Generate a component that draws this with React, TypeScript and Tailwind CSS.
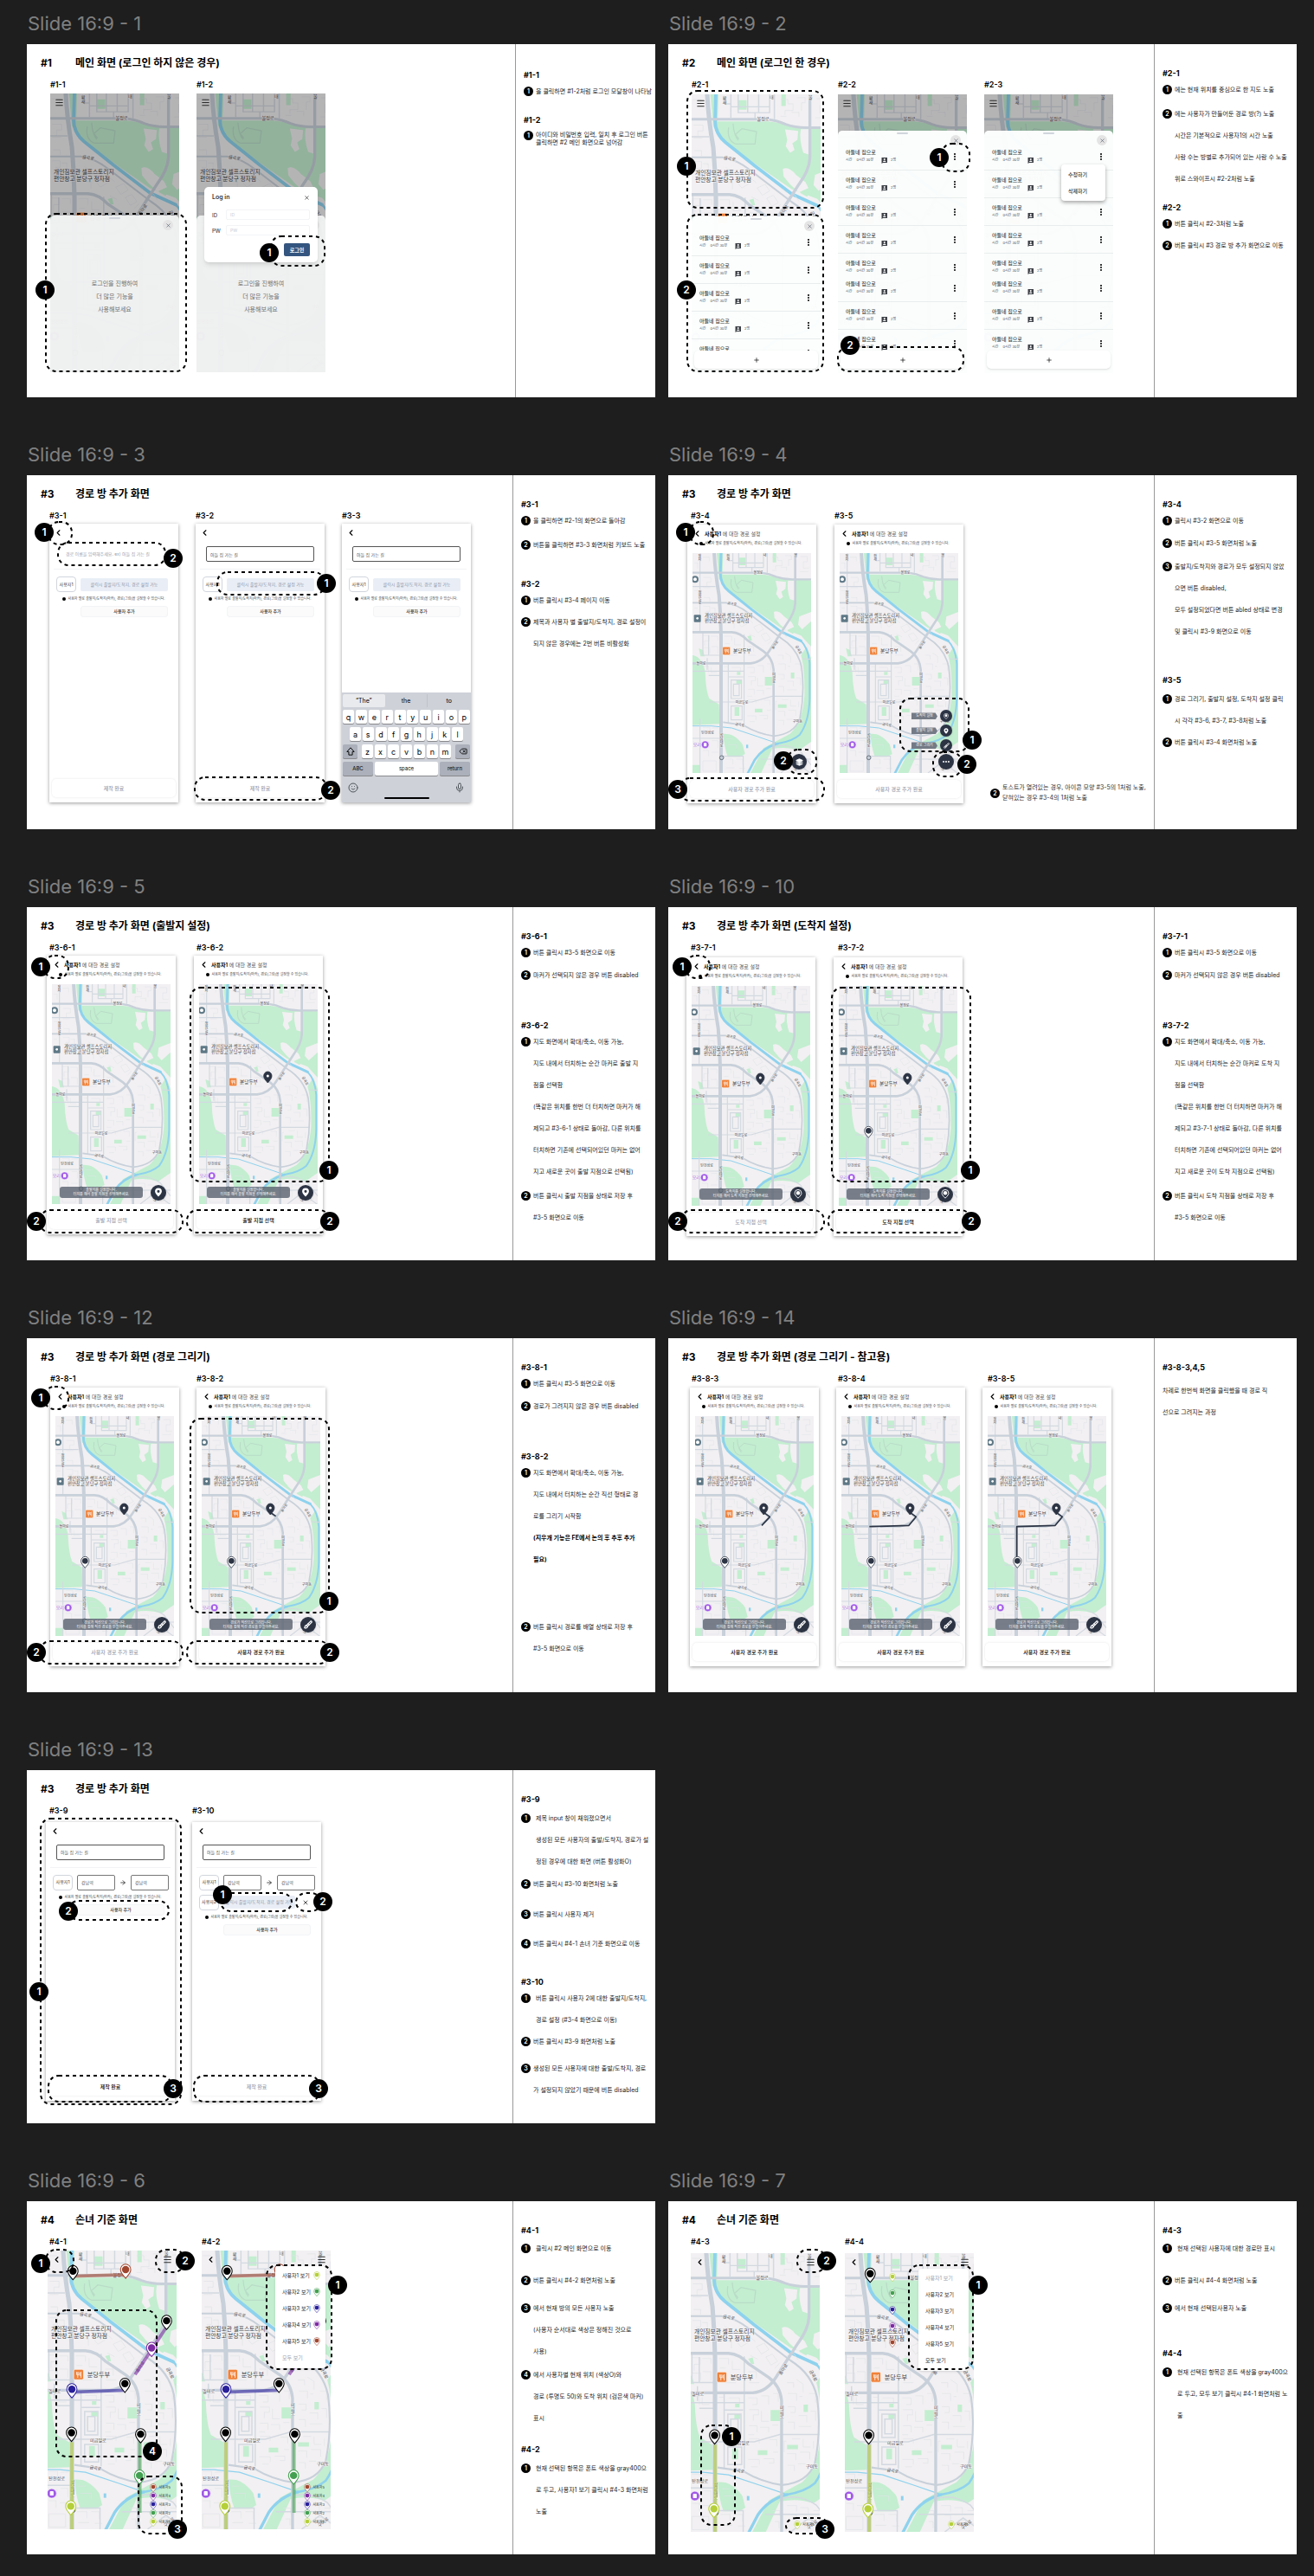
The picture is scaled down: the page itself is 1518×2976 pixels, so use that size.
import React from "react";
import { ArrowRight, Brush, ChevronLeft, Delete, Layers, Menu, Mic, MoreHorizontal, MoreVertical, Plus, Smile, X } from "lucide-react";

/* ---------- map drawing ---------- */

type Area = "inset" | "full";

const VIEW: Record<Area, string> = {
  inset: "24 116 411 762",
  full: "56 116 354 762",
};

function Pin({ x, y, fill, solid = false }: { x: number; y: number; fill: string; solid?: boolean }) {
  return (
    <g transform={`translate(${x} ${y})`}>
      <path d="M0 21C-8 11 -14 6 -14 -3A14 15 0 0 1 14 -3C14 6 8 11 0 21Z" fill={solid ? fill : "#fff"} stroke={fill} strokeWidth="2.4" />
      {solid ? <circle cy="-3" r="4.5" fill="#fff" /> : <circle cy="-3" r="10" fill={fill} />}
    </g>
  );
}

function MapArt({ area, children }: { area: Area; children?: React.ReactNode }) {
  return (
    <svg viewBox={VIEW[area]} preserveAspectRatio="xMidYMid slice" className="block size-full" role="img" aria-label="지도">
      <rect x="24" y="116" width="411" height="762" fill="#f2f0f2" />
      <g fill="#c3eed0">
        <path d="M108 116H130L128 190H265Q300 193 348 208L435 210V440L400 402L330 375L250 320L170 262L132 228L116 205Z" />
        <path d="M24 470Q60 476 68 530Q70 592 82 620L116 640L118 708L24 712Z" />
        <path d="M400 470Q414 520 412 610Q406 700 362 742L310 770L270 792L225 878H262L300 795Q350 785 392 800L435 770V480L420 440Z" />
        <path d="M130 742Q176 740 196 772L206 812L190 822H146Q134 790 130 742Z" />
        <path d="M24 850H50V878H24ZM275 545h26v30h-26zM365 530h12v20h-12zM320 640h30v12h-30zM240 655h26v13h-26zM170 650h16v30h-16zM176 556h16v14h-16zM183 132h24v26h-24zM302 116h12v32h-12zM46 446l14 6 6 22h-14zM214 405l12-4 4 18h-8zM356 376l22 12-6 8-18-10zM178 528h12v10h-12z" />
      </g>
      <g fill="#f2f0f2">
        <path d="M312 212L348 216L346 240L332 250L338 268L326 276L314 258L318 240Z" />
        <path d="M306 320Q322 312 342 336L368 356L376 372L350 384L326 362L308 340Z" />
        <path d="M355 211H382V282L362 276Q350 240 355 211Z" />
        <path d="M394 336L435 320V352L404 380L390 364Z" />
        <path d="M132 720L250 752L296 770L262 792L205 790Q176 744 132 738Z" />
      </g>
      <path d="M158 206q-6 36 20 46l52 0 4 -34 -40 -8 -18 16 10 12M170 196q2 30 14 46" fill="none" stroke="#b9dcc8" strokeWidth="3" />
      <g fill="none" stroke="#8ed2ee" strokeLinejoin="round" strokeLinecap="round">
        <path d="M123 112L121 180Q118 222 150 248L230 312L330 388L400 420" strokeWidth="9" />
        <path d="M400 420Q426 446 430 500L430 620Q428 700 396 745Q370 768 320 776" strokeWidth="6" />
        <path d="M320 776Q268 790 240 832L214 882" strokeWidth="8" />
        <path d="M20 715L90 715L160 722L250 752L320 776" strokeWidth="3" />
      </g>
      <path d="M210 780h7v12h-7z" fill="#8ed2ee" />
      <g fill="none" stroke="#dfe2e8" strokeWidth="1.5">
        <path d="M300 130h20v12h14v18h-22v12M345 125h22v14h-10v22M398 128h24v18h-14v22h20M395 180h30M330 165h20v12M300 176h16M60 130h22v14M30 150h12v20M62 200h26v16h-14v16M62 236h24M30 246h14v18M64 270h20v14M62 300h22v18h-12v18M88 306h14v20M30 306h12M150 316l20 12-8 14M176 350l22-10 16 20-20 12zM150 356h18v20M214 342l20 16M236 372l22-10 12 18-20 12zM220 396l20 10M262 400l18-8 14 20-18 10zM300 372l16 12M318 398l20-8 12 18M286 432l14-16" />
        <path d="M60 402h22v18H66v18M88 404h24v14M60 444h24v20M90 440h22v24M134 404h26v16M136 430h16M170 410v24h22M214 440h22v18M150 470h30M216 470h28M60 508h20v22M88 510v20h20M134 510h14v20M160 512h30v16M214 512h24v18h-14M250 506h20v24M282 500h14v22M216 544h26v14h-14v16M250 548v28h20M216 588h22v18M246 592h24v14M280 586h16M214 612h16M320 470h18v14M346 462l18 12v22M322 500h24v20M354 508h8M380 500h18v24M322 536h20v16h-12M352 560h22v18M384 548h14v26M322 578h18v20M352 590h34M318 630h-6v30M334 624h22M364 624v22h20M392 630v20M320 664h24v18M356 660h26v20M322 696h18v16M350 692h20M216 624h28v12M272 626h20v18M214 680h30v14M256 678h28v12h-14M222 700h18M282 660h14" />
        <path d="M60 720h24v14M92 722h22M30 770h-6M60 770h22v18H66M92 766h20v24M60 800h20v20M90 806h24M140 760h22M146 780h30v14M138 830h26v18M176 830h22v20M140 860h30M60 836h46v36H60zM186 862h20M280 820h20v14M320 806h26v16M356 812h22v20M330 832h16v24M286 850h12v18M392 820h18v14M366 846h22v20M400 856h16" />
      </g>
      <g fill="none" stroke="#d3d9e1" strokeWidth="3.5">
        <path d="M50 116V392M24 232H104M60 392V470H120M80 400V470M24 525H203M80 540H120M148 500V706M203 398V706M150 545H200M158 556H194V620H158ZM166 570H186V610H166ZM158 646H196V694H158ZM82 632H230L300 612H408M24 758H120M50 690V878M120 820H200V878M260 830H435M164 116V180M184 116V166H270V116M210 116V166M240 116V166M146 142H164M164 150H270M283 116V184M230 166V184M405 482L435 484M300 790Q350 770 400 805L435 850M330 878L380 840L435 880M75 480V520" />
      </g>
      <g fill="none" stroke="#c8d0da" strokeLinejoin="round">
        <path d="M24 288H140Q180 294 215 322L330 410Q388 446 402 510Q414 600 396 690Q376 744 306 750Q250 742 200 712L130 702" strokeWidth="5" />
        <path d="M380 112V290Q378 324 350 362L290 455Q266 494 226 498H24" strokeWidth="8" />
        <path d="M24 184H262Q292 188 314 198Q340 207 370 207H440" strokeWidth="7" />
        <path d="M24 390H160Q190 392 214 418L270 456Q302 480 305 520V882" strokeWidth="8" />
        <path d="M99 112Q102 180 116 262Q122 330 123 400V882" strokeWidth="12" />
      </g>
      <g fill="#3f4247" fontSize="12" textAnchor="middle" fontFamily="'Noto Sans CJK KR', sans-serif" stroke="#f5f4f6" strokeWidth="2" paintOrder="stroke">
        <text x="252" y="187">불정로</text>
        <text transform="translate(160 296) rotate(10)">금곡로</text>
        <text x={area === "inset" ? 54 : 76} y="503">돌마로</text>
        <text transform="translate(313 436) rotate(-55)">돌마로</text>
        <text transform="translate(388 453) rotate(62)">금곡로</text>
        <text x="306" y="550" writingMode="vertical-rl">미금로</text>
        <text x="195" y="639">미금일로</text>
        <text transform="translate(187 715) rotate(10)">금곡로</text>
        <text x="388" y="704">구미동</text>
        <text x={area === "inset" ? 77 : 82} y="742">탄천상로</text>
        <text x="125" y="765" writingMode="vertical-rl">성남대로</text>
        <text x="147" y="131" writingMode="vertical-rl">황새</text>
        <text x="275" y="129">내</text>
        <text x="382" y="129">불</text>
        {area === "inset" && (
          <>
            <text x="49" y="131" writingMode="vertical-rl">정자</text>
            <text x="50" y="270" writingMode="vertical-rl">정자일로</text>
            <text x="40" y="785" fontSize="15" fill="#a05be0">오리</text>
          </>
        )}
        <text transform="translate(392 862) rotate(-40)">구미로</text>
        <text x="66" y="337" fontSize="16" textAnchor="start">개인짐보관 셀프스토리지</text>
        <text x="66" y="356" fontSize="16" textAnchor="start">편안창고 분당구 정자점</text>
        <text x="165" y="461" fontSize="17" textAnchor="start">분당두부</text>
      </g>
      <circle cx="33" cy="207" r="9" fill="#fff" stroke="#5f7886" strokeWidth="6" />
      <rect x="29" y="330" width="24" height="25" rx="3" fill="#5f7886" />
      <circle cx="41" cy="342" r="4" fill="#fff" />
      <rect x="128" y="441" width="27" height="28" rx="4" fill="#f0823a" stroke="#fff" strokeWidth="1.5" />
      <path d="M136 448v6q0 3 3 3v7M139 448v9M142 448v6q0 3-3 3M148 464v-16q-4 2-4 9h4" fill="none" stroke="#fff" strokeWidth="1.8" />
      <circle cx="68" cy="780" r="13" fill="#a15be6" stroke="#fff" strokeWidth="1.5" />
      <rect x="63" y="774" width="10" height="12" rx="2" fill="#fff" />
      <circle cx="125" cy="825" r="7" fill="#c5cdd8" stroke="#56606e" strokeWidth="2.5" />
      {children}
    </svg>
  );
}

const BROWN = "#a0462f";
const PURPLE = "#7d2aa3";
const BLUE = "#29209b";
const GREEN = "#43a050";
const LIME = "#b5cf3a";
const DARK = "#2c3444";

const USERS = [
  { name: "사용자1", color: LIME },
  { name: "사용자2", color: GREEN },
  { name: "사용자3", color: BLUE },
  { name: "사용자4", color: PURPLE },
  { name: "사용자5", color: BROWN },
];

/* ---------- annotation marks ---------- */

function Mark({ at }: { at: string }) {
  return (
    <div className={`pointer-events-none absolute ${at}`}>
      <svg className="block size-full overflow-visible" aria-hidden="true">
        <rect width="100%" height="100%" rx="12" fill="none" stroke="#000" strokeWidth="2" strokeDasharray="4 4" />
      </svg>
    </div>
  );
}

function Num({ n, at }: { n: number; at: string }) {
  return (
    <span className={`absolute flex size-[22px] items-center justify-center rounded-full bg-black text-[12px] font-semibold text-white ${at}`}>
      {n}
    </span>
  );
}

function Dot({ n }: { n: number }) {
  return <span className="flex size-[11px] shrink-0 items-center justify-center rounded-full bg-black text-[7px] leading-none font-semibold text-white">{n}</span>;
}

/* ---------- phone screens ---------- */

function MenuIcon({ className = "" }: { className?: string }) {
  return (
    <button type="button" aria-label="메뉴" className={`absolute text-[#2b2b2b] ${className}`}>
      <Menu className="size-[11px]" strokeWidth={2.5} />
    </button>
  );
}

function Back() {
  return (
    <button type="button" aria-label="뒤로" className="flex size-[11px] items-center justify-center text-black">
      <ChevronLeft className="size-[11px]" strokeWidth={2.5} />
    </button>
  );
}

function Sheet({ top, dim, children }: { top: string; dim?: boolean; children: React.ReactNode }) {
  return (
    <div className={`absolute inset-x-0 bottom-0 overflow-hidden rounded-t-[5px] ${top} ${dim ? "bg-[#f0f1f1]/98" : "bg-[#fcfefd]/98"}`}>
      <span className="mx-auto mt-[2px] block h-[2px] w-[13px] rounded-full bg-gray-300" />
      <div className="flex justify-end pt-[1px] pr-[7px]">
        <button type="button" aria-label="닫기" className="flex size-3 items-center justify-center rounded-full bg-[#e4e4e4] text-gray-600">
          <X className="size-[7px]" />
        </button>
      </div>
      {children}
    </div>
  );
}

function LoginScreen({ modal = false }: { modal?: boolean }) {
  return (
    <div className="relative h-[322px] overflow-hidden">
      <MapArt area="full" />
      <div className="absolute inset-0 bg-black/25" />
      <MenuIcon className="top-[5px] left-[5px]" />
      <Sheet top="top-[141px]" dim>
        <p className="mt-[54px] text-center text-[7px] leading-[15px] text-[#707070]">
          로그인을 진행하여
          <br />더 많은 기능을
          <br />
          사용해보세요
        </p>
      </Sheet>
      {modal && (
        <form className="absolute top-[108px] left-[9px] flex h-[87px] w-[131px] flex-col rounded-[5px] bg-white pt-[7px] pr-[9px] pl-[9px] shadow-md" onSubmit={(e) => e.preventDefault()}>
          <div className="flex items-center justify-between">
            <h4 className="text-[7px] leading-[10px] font-semibold text-[#30343a]">Log in</h4>
            <button type="button" aria-label="닫기">
              <X className="size-[7px]" />
            </button>
          </div>
          <label className="mt-[9px] flex items-center text-[6px] font-medium text-[#454a52]">
            <span className="w-[19px]">ID</span>
            <input placeholder="ID" className="h-3 w-full rounded-[2px] border border-gray-100 px-1 text-[5px] placeholder:text-gray-300" />
          </label>
          <label className="mt-[6px] flex items-center text-[6px] font-medium text-[#454a52]">
            <span className="w-[19px]">PW</span>
            <input type="password" placeholder="PW" className="h-3 w-full rounded-[2px] border border-gray-100 px-1 text-[5px] placeholder:text-gray-300" />
          </label>
          <button type="submit" className="mt-[9px] h-[15px] w-[30px] self-end rounded-[2px] bg-[#34557f] text-[6px] leading-none font-semibold text-white">
            로그인
          </button>
        </form>
      )}
    </div>
  );
}

function RoomItem({ tight }: { tight?: boolean }) {
  return (
    <li className={`flex items-start pr-[9px] pl-[9px] ${tight ? "h-[24px]" : "h-[32px] border-b border-[#e9eded]"}`}>
      <div className="flex-1 pt-[7px]">
        <p className="text-[6px] leading-[8px] font-medium text-[#3a3d40]">아들네 집으로</p>
        <p className="mt-px flex items-center text-[4px] leading-[8px] text-gray-600">
          <span>시간</span>
          <span className="ml-[5px]">0시간 30분</span>
          <svg viewBox="0 0 14 14" className="ml-[9px] size-[7px]" aria-hidden="true">
            <path d="M1 0H14V12H4L1 14Z" fill="#3d4147" />
            <circle cx="7.5" cy="4" r="2" fill="#fff" />
            <path d="M4 10q0-3 3.500-3t3.500 3z" fill="#fff" />
          </svg>
          <span className="ml-1">2명</span>
        </p>
      </div>
      <button type="button" aria-label="더보기" className="mt-[11px]">
        <MoreVertical className="size-[10px]" strokeWidth={3} />
      </button>
    </li>
  );
}

function RoomScreen({ raised = false, menu = false }: { raised?: boolean; menu?: boolean }) {
  const items = raised ? [0, 0, 0, 0, 1, 0, 0, 0] : [0, 0, 0, 0, 0];
  return (
    <div className="relative h-[322px] overflow-hidden">
      <MapArt area="full" />
      {raised && <div className="absolute inset-0 bg-black/25" />}
      <MenuIcon className="top-[5px] left-[5px]" />
      <Sheet top={raised ? "top-[42px]" : "top-[141px]"}>
        <ul className="-mt-[3px]">
          {items.map((t, i) => (
            <RoomItem key={i} tight={t === 1} />
          ))}
        </ul>
      </Sheet>
      <div className="absolute inset-x-0 bottom-0 h-[26px] bg-[#fcfefd] px-[3px]">
        <button type="button" aria-label="경로 방 추가" className="flex h-[21px] w-full items-center justify-center rounded-[5px] bg-white text-black shadow-sm">
          <Plus className="size-2" />
        </button>
      </div>
      {menu && (
        <div className="absolute top-[81px] left-[89px] flex h-[42px] w-[51px] flex-col rounded-[4px] bg-white py-[2px] text-left text-[6px] font-medium text-[#333] shadow-[0_2px_4px_rgba(0,0,0,0.35)]">
          <button type="button" className="flex-1 px-2 text-left leading-none">수정하기</button>
          <button type="button" className="flex-1 px-2 text-left leading-none">삭제하기</button>
        </div>
      )}
    </div>
  );
}

const SHELL = "flex h-[322px] flex-col bg-white shadow-[0_1px_4px_rgba(0,0,0,0.4)]";

function BottomButton({ label, active }: { label: string; active?: boolean }) {
  return (
    <button
      type="button"
      disabled={!active}
      className="mx-[3px] mt-auto mb-[6px] h-[21px] shrink-0 rounded-[5px] bg-white text-[6px] font-medium text-black shadow-[0_0_3px_rgba(0,0,0,0.1)] disabled:text-gray-400"
    >
      {label}
    </button>
  );
}

function Hint() {
  return (
    <p className="flex items-center justify-center gap-[2px] text-[4px] leading-[6px] whitespace-nowrap text-[#444]">
      <span className="size-[4px] rounded-full bg-black" />
      사용자 별로 출발지/도착지(마커), 경로(그림)을 설정할 수 있습니다.
    </p>
  );
}

function UserChip({ name }: { name: string }) {
  return <span className="flex h-[18px] w-[23px] shrink-0 items-center justify-center rounded-[4px] border border-gray-300 text-[5px] text-[#333]">{name}</span>;
}

function PickButton() {
  return (
    <button type="button" className="h-[15px] min-w-0 flex-1 rounded-[2px] bg-[#e9eef6] text-[5px] whitespace-nowrap text-[#8a94a6]">
      클릭시 출발지/도착지, 경로 설정 가능
    </button>
  );
}

function FormScreen({ empty, keyboard, places, second, done }: { empty?: boolean; keyboard?: boolean; places?: boolean; second?: boolean; done?: boolean }) {
  const place = "h-[18px] w-[44px] rounded-[2px] border border-[#777] px-[4px] text-[5px] text-[#555]";
  return (
    <div className={SHELL}>
      <div className="pt-[5px] pl-[5px]">
        <Back />
      </div>
      <input
        aria-label="경로 이름"
        defaultValue={empty ? "" : "아들 집 가는 길"}
        placeholder="경로 이름을 입력해주세요. ex) 아들 집 가는 길"
        className={`mx-3 mt-[10px] h-[18px] rounded-[2px] border text-[5px] text-[#555] placeholder:text-gray-400 ${empty ? "border-transparent px-[6px]" : "border-[#555] px-1"}`}
      />
      <hr className="mx-[5px] mt-2 border-gray-100" />
      <div className="mt-[8px] flex flex-col gap-[5px] pr-3 pl-2">
        <div className="flex items-center gap-[5px]">
          <UserChip name="사용자1" />
          {places ? (
            <>
              <input aria-label="출발지" defaultValue="강남역" className={place} />
              <ArrowRight className="size-[8px] shrink-0" />
              <input aria-label="도착지" defaultValue="강남역" className={place} />
            </>
          ) : (
            <PickButton />
          )}
        </div>
        {second && (
          <div className="flex items-center gap-[5px]">
            <UserChip name="사용자2" />
            <PickButton />
            <button type="button" aria-label="사용자 제거" className="w-[13px]">
              <X className="mx-auto size-[8px]" />
            </button>
          </div>
        )}
      </div>
      <div className="mt-[5px]">
        <Hint />
      </div>
      <button type="button" className="mt-[5px] mr-3 ml-9 h-[13px] rounded-[3px] border border-gray-100 bg-[#fbfbfb] text-[5px] leading-none font-medium text-[#333]">
        사용자 추가
      </button>
      {keyboard ? <Keyboard /> : <BottomButton label="제작 완료" active={done} />}
    </div>
  );
}

function Key({ k }: { k: string }) {
  return (
    <button type="button" className="h-4 w-[13px] rounded-[2px] bg-white text-[9px] leading-none text-black shadow-[0_1px_0_#898a8d]">
      {k}
    </button>
  );
}

function Keyboard() {
  const fn = "flex h-4 items-center justify-center rounded-[2px] bg-[#abb0ba] text-[6px] leading-none shadow-[0_1px_0_#898a8d]";
  return (
    <div className="mt-auto flex h-[127px] flex-col bg-[#ced1d8] px-[1px] pt-[2px]">
      <div className="flex h-[15px] text-[7px] leading-none">
        <button type="button" className="flex-1 rounded-[2px] bg-[#e9eaed]">“The”</button>
        <button type="button" className="flex-1">the</button>
        <button type="button" className="flex-1 border-l border-[#bfc3cb]">to</button>
      </div>
      <div className="mt-[3px] flex justify-between">
        {"qwertyuiop".split("").map((k) => (
          <Key key={k} k={k} />
        ))}
      </div>
      <div className="mt-1 flex justify-between px-2">
        {"asdfghjkl".split("").map((k) => (
          <Key key={k} k={k} />
        ))}
      </div>
      <div className="mt-1 flex justify-between">
        <button type="button" aria-label="shift" className={`${fn} w-[17px]`}>
          <svg viewBox="0 0 12 12" className="size-[10px]" fill="none" stroke="#000" strokeWidth="1.1" strokeLinejoin="round">
            <path d="M6 1L11 6.5H8.5V11H3.5V6.5H1Z" />
          </svg>
        </button>
        <div className="flex gap-[2px]">
          {"zxcvbnm".split("").map((k) => (
            <Key key={k} k={k} />
          ))}
        </div>
        <button type="button" aria-label="delete" className={`${fn} w-[17px]`}>
          <Delete className="size-[10px]" />
        </button>
      </div>
      <div className="mt-1 flex gap-[2px]">
        <button type="button" className={`${fn} w-[35px]`}>ABC</button>
        <button type="button" className="h-4 flex-1 rounded-[2px] bg-white text-[6px] leading-none shadow-[0_1px_0_#898a8d]">space</button>
        <button type="button" className={`${fn} w-[35px]`}>return</button>
      </div>
      <div className="mt-2 flex justify-between px-[6px] text-[#50555c]">
        <Smile className="size-3" />
        <Mic className="size-3" />
      </div>
      <span className="mx-auto mt-[5px] h-[2px] w-[52px] rounded-full bg-black" />
    </div>
  );
}

type FabKind = "layers" | "more" | "start" | "end" | "draw";

function PinGlyph({ outline, className }: { outline?: boolean; className: string }) {
  return (
    <svg viewBox="0 0 12 14" className={className} aria-hidden="true">
      {outline ? (
        <>
          <path d="M6 13C3 10 1 8 1 5.5a5 5 0 0 1 10 0C11 8 9 10 6 13Z" fill="none" stroke="#fff" strokeWidth="1.2" />
          <circle cx="6" cy="5.5" r="2.8" fill="#fff" />
        </>
      ) : (
        <path fillRule="evenodd" d="M6 13.500C3 10.500 1 8 1 5.500a5 5 0 0 1 10 0C11 8 9 10.500 6 13.500ZM6 7.500a2 2 0 1 0 0-4 2 2 0 0 0 0 4Z" fill="#fff" />
      )}
    </svg>
  );
}

const FAB_LABEL: Record<FabKind, string> = { layers: "메뉴 열기", more: "메뉴 닫기", start: "출발지 설정", end: "도착지 설정", draw: "경로 그리기" };

function Fab({ kind, small }: { kind: FabKind; small?: boolean }) {
  return (
    <button
      type="button"
      aria-label={FAB_LABEL[kind]}
      className={`flex shrink-0 items-center justify-center rounded-full bg-[#2c3444] text-white shadow ${small ? "size-[14px]" : "size-[18px]"}`}
    >
      {kind === "layers" && <Layers className="size-[9px] fill-white" strokeWidth={2} />}
      {kind === "more" && <MoreHorizontal className="size-[10px]" strokeWidth={3} />}
      {kind === "draw" && <Brush className={small ? "size-[7px]" : "size-[10px]"} strokeWidth={3} />}
      {(kind === "start" || kind === "end") && <PinGlyph outline={kind === "end"} className={small ? "h-[7px] w-[6px]" : "h-[11px] w-[10px]"} />}
    </button>
  );
}

type RouteProps = {
  fab: FabKind;
  toast?: [string, string];
  start?: boolean;
  end?: boolean;
  route?: string;
  label: string;
  active?: boolean;
  open?: boolean;
};

function RouteScreen({ fab, toast, start, end, route, label, active, open }: RouteProps) {
  return (
    <div className={SHELL}>
      <div className="flex items-center gap-[3px] pt-[5px] pl-[6px]">
        <Back />
        <p className="text-[6px] leading-[11px] text-[#555]">
          <b className="font-semibold text-black">사용자1</b> 에 대한 경로 설정
        </p>
      </div>
      <div className="mt-[3px] pr-[2px]">
        <Hint />
      </div>
      <div className="relative mx-[6px] mt-[8px] h-[254px]">
        <MapArt area="inset">
          {start && <Pin x={262} y={437} fill={DARK} solid />}
          {route && <path d={route} fill="none" stroke={DARK} strokeWidth="5" strokeLinejoin="round" />}
          {end && <Pin x={127} y={621} fill={DARK} />}
        </MapArt>
        {toast && (
          <p className="absolute bottom-[7px] left-[9px] flex h-[13px] w-[96px] flex-col items-center justify-center rounded-[3px] bg-[#59616e]/80 text-[4px] leading-[5px] whitespace-nowrap text-white">
            <span>{toast[0]}</span>
            <span>{toast[1]}</span>
          </p>
        )}
        <div className="absolute right-[5px] bottom-[4px] flex flex-col items-center gap-[3px]">
          {open &&
            (["end", "start", "draw"] as FabKind[]).map((k) => (
              <div key={k} className="relative">
                <Fab kind={k} small />
                <span className="absolute top-[3px] right-[17px] flex h-[8px] w-[30px] items-center justify-center bg-[#747b86] text-[4px] leading-none whitespace-nowrap text-white [clip-path:polygon(0_0,92%_0,100%_50%,92%_100%,0_100%)]">
                  {FAB_LABEL[k]}
                </span>
              </div>
            ))}
          <Fab kind={fab} />
        </div>
      </div>
      <BottomButton label={label} active={active} />
    </div>
  );
}

function MiniPin({ color }: { color: string }) {
  return (
    <svg viewBox="-16 -20 32 42" className="h-[10px] w-[8px] shrink-0" aria-hidden="true">
      <Pin x={0} y={0} fill={color} />
    </svg>
  );
}

function ViewMenu({ pins, off }: { pins?: boolean; off: number }) {
  return (
    <div className="absolute top-[18px] left-[85px] flex w-[58px] flex-col rounded-[4px] bg-white py-[2px] shadow">
      {USERS.map((u, i) => (
        <button key={u.name} type="button" className={`flex h-[19px] items-center justify-between pr-[6px] pl-2 text-[6px] leading-none whitespace-nowrap ${i === off ? "text-gray-400" : "text-[#222]"}`}>
          {u.name} 보기
          {pins && <MiniPin color={u.color} />}
        </button>
      ))}
      <button type="button" className={`flex h-[19px] items-center pl-2 text-[6px] leading-none ${off === 5 ? "text-gray-400" : "text-[#222]"}`}>
        모두 보기
      </button>
    </div>
  );
}

function GuideScreen({ single, menu, loose }: { single?: boolean; menu?: boolean; loose?: boolean }) {
  const legend = single ? [USERS[0]] : [...USERS].reverse();
  return (
    <div className="relative h-[322px] overflow-hidden">
      <MapArt area="full">
        <g fill="none" strokeWidth="9" opacity="0.6">
          <path d="M123 640V878" stroke={LIME} />
          {!single && (
            <>
              <path d="M125 186L270 182" stroke={BROWN} />
              <path d="M382 325L296 455" stroke={PURPLE} />
              <path d="M123 503L268 498" stroke={BLUE} />
              <path d="M309 632V833" stroke={GREEN} />
            </>
          )}
        </g>
        <Pin x={122} y={617} fill="#000" />
        <Pin x={120} y={818} fill={LIME} />
        {(!single || loose) && <Pin x={126} y={175} fill="#000" />}
        {!single && (
          <>
            <Pin x={382} y={311} fill="#000" />
            <Pin x={268} y={483} fill="#000" />
            <Pin x={311} y={621} fill="#000" />
            <Pin x={270} y={171} fill={BROWN} />
            <Pin x={341} y={385} fill={PURPLE} />
            <Pin x={123} y={498} fill={BLUE} />
            <Pin x={308} y={734} fill={GREEN} />
          </>
        )}
      </MapArt>
      <div className="absolute inset-x-[5px] top-[5px] flex items-center justify-between">
        <Back />
        <button type="button" aria-label="메뉴" className="text-[#2b2b2b]">
          <Menu className="size-[11px]" strokeWidth={2.5} />
        </button>
      </div>
      <ul className="absolute right-[7px] bottom-[3px] flex flex-col">
        {legend.map((u) => (
          <li key={u.name} className="flex h-[10px] items-center gap-[2px] text-[4px] leading-none text-[#333]">
            <MiniPin color={u.color} />
            {u.name}
          </li>
        ))}
      </ul>
      {loose && (
        <div className="absolute top-[23px] left-[51px] flex flex-col gap-[9px]">
          {USERS.map((u) => (
            <MiniPin key={u.name} color={u.color} />
          ))}
        </div>
      )}
      {menu && <ViewMenu pins={!loose} off={loose ? 0 : 5} />}
    </div>
  );
}

/* ---------- slides ---------- */

type Note = { h?: string; n?: number; gap?: string; lines?: string[]; bold?: string[]; tight?: boolean; indent?: boolean };
type Screen = { cap: string; shift?: string; view: React.ReactNode };
type SlideData = {
  name: string;
  no: string;
  title: string;
  row: string;
  drop?: string;
  aside?: string;
  screens: Screen[];
  extra?: React.ReactNode;
  marks: string[];
  nums: [number, string][];
  notes: Note[];
};

const START_TOAST: [string, string] = ["출발지를 설정합니다.", "터치를 해서 출발 지점을 선택해주세요."];
const END_TOAST: [string, string] = ["도착지를 설정합니다.", "터치를 해서 도착 지점을 선택해주세요."];
const DRAW_TOAST: [string, string] = ["경로가 직선으로 그려집니다.", "터치를 통해 직선 경로를 만들어주세요."];
const DONE = "사용자 경로 추가 완료";

const PAIR_MARKS = [
  "left-[20px] top-[56px] w-[28px] h-[26px]",
  "left-[189px] top-[93px] w-[160px] h-[224px]",
  "left-[15px] top-[350px] w-[165px] h-[26px]",
  "left-[185px] top-[350px] w-[165px] h-[26px]",
];
const PAIR_NUMS: [number, string][] = [
  [1, "left-[5px] top-[58px]"],
  [1, "left-[338px] top-[293px]"],
  [2, "left-0 top-[352px]"],
  [2, "left-[339px] top-[352px]"],
];

const SLIDES: (SlideData | null)[] = [
  {
    name: "Slide 16:9 - 1",
    no: "#1",
    title: "메인 화면 (로그인 하지 않은 경우)",
    row: "pl-[27px] gap-5",
    aside: "w-[162px]",
    screens: [
      { cap: "#1-1", view: <LoginScreen /> },
      { cap: "#1-2", view: <LoginScreen modal /> },
    ],
    marks: ["left-[22px] top-[196px] w-[162px] h-[182px]", "left-[282px] top-[222px] w-[62px] h-[34px]"],
    nums: [
      [1, "left-[10px] top-[273px]"],
      [1, "left-[269px] top-[230px]"],
    ],
    notes: [
      { h: "#1-1", gap: "mt-[2px]" },
      { n: 1, lines: ["을 클릭하면 #1-2처럼 로그인 모달창이 나타남"] },
      { h: "#1-2", gap: "mt-[15px]" },
      { n: 1, gap: "mt-[6px]", tight: true, lines: ["아이디와 비밀번호 입력, 일치 후 로그인 버튼", "클릭하면 #2 메인 화면으로 넘어감"] },
    ],
  },
  {
    name: "Slide 16:9 - 2",
    no: "#2",
    title: "메인 화면 (로그인 한 경우)",
    row: "pl-[27px] gap-5",
    drop: "mt-[5px]",
    screens: [
      { cap: "#2-1", view: <RoomScreen /> },
      { cap: "#2-2", view: <RoomScreen raised /> },
      { cap: "#2-3", view: <RoomScreen raised menu /> },
    ],
    marks: [
      "left-[22px] top-[54px] w-[157px] h-[135px]",
      "left-[22px] top-[197px] w-[157px] h-[181px]",
      "left-[316px] top-[115px] w-[32px] h-[32px]",
      "left-[196px] top-[350px] w-[145px] h-[28px]",
    ],
    nums: [
      [1, "left-[10px] top-[130px]"],
      [2, "left-[10px] top-[273px]"],
      [1, "left-[302px] top-[120px]"],
      [2, "left-[199px] top-[337px]"],
    ],
    notes: [
      { h: "#2-1" },
      { n: 1, lines: ["에는 현재 위치를 중심으로 한 지도 노출"] },
      { n: 2, gap: "mt-[3px]", lines: ["에는 사용자가 만들어둔 경로 방(?) 노출", "시간은 기본적으로 사용자1의 시간 노출", "사람 수는 방별로 추가되어 있는 사람 수 노출", "위로 스와이프시 #2-2처럼 노출"] },
      { h: "#2-2", gap: "mt-[15px]" },
      { n: 1, lines: ["버튼 클릭시 #2-3처럼 노출"] },
      { n: 2, lines: ["버튼 클릭시 #3 경로 방 추가 화면으로 이동"] },
    ],
  },
  {
    name: "Slide 16:9 - 3",
    no: "#3",
    title: "경로 방 추가 화면",
    row: "pl-[26px] gap-5",
    drop: "mt-[3px]",
    screens: [
      { cap: "#3-1", view: <FormScreen empty /> },
      { cap: "#3-2", view: <FormScreen /> },
      { cap: "#3-3", view: <FormScreen keyboard /> },
    ],
    marks: [
      "left-[25px] top-[54px] w-[27px] h-[26px]",
      "left-[36px] top-[78px] w-[124px] h-[26px]",
      "left-[220px] top-[112px] w-[124px] h-[26px]",
      "left-[194px] top-[349px] w-[152px] h-[26px]",
    ],
    nums: [
      [1, "left-[9px] top-[55px]"],
      [2, "left-[158px] top-[85px]"],
      [1, "left-[335px] top-[114px]"],
      [2, "left-[340px] top-[353px]"],
    ],
    notes: [
      { h: "#3-1" },
      { n: 1, lines: ["을 클릭하면 #2-1의 화면으로 돌아감"] },
      { n: 2, gap: "mt-[3px]", lines: ["버튼을 클릭하면 #3-3 화면처럼 키보드 노출"] },
      { h: "#3-2", gap: "mt-[27px]" },
      { n: 1, lines: ["버튼 클릭시 #3-4 페이지 이동"] },
      { n: 2, lines: ["제목과 사용자 별 출발지/도착지, 경로 설정이", "되지 않은 경우에는 2번 버튼 비활성화"] },
    ],
  },
  {
    name: "Slide 16:9 - 4",
    no: "#3",
    title: "경로 방 추가 화면",
    row: "pl-[22px] gap-[21px]",
    screens: [
      { cap: "#3-4", shift: "pl-1", view: <RouteScreen fab="layers" label={DONE} /> },
      { cap: "#3-5", view: <RouteScreen fab="more" open label={DONE} /> },
    ],
    extra: (
      <div className="ml-[10px] flex items-center gap-[3px] self-end">
        <Dot n={2} />
        <p className="text-[7px] leading-3 whitespace-nowrap text-[#333]">
          토스트가 열려있는 경우, 아이콘 모양 #3-5의 1처럼 노출,
          <br />
          닫혀있는 경우 #3-4의 1처럼 노출
        </p>
      </div>
    ),
    marks: [
      "left-[25px] top-[54px] w-[27px] h-[26px]",
      "left-[138px] top-[317px] w-[33px] h-[28px]",
      "left-[13px] top-[350px] w-[167px] h-[26px]",
      "left-[268px] top-[258px] w-[79px] h-[61px]",
      "left-[306px] top-[320px] w-[33px] h-[28px]",
    ],
    nums: [
      [1, "left-[9px] top-[55px]"],
      [2, "left-[122px] top-[319px]"],
      [3, "left-0 top-[352px]"],
      [1, "left-[340px] top-[295px]"],
      [2, "left-[334px] top-[323px]"],
    ],
    notes: [
      { h: "#3-4" },
      { n: 1, lines: ["클릭시 #3-2 화면으로 이동"] },
      { n: 2, gap: "mt-px", lines: ["버튼 클릭시 #3-5 화면처럼 노출"] },
      { n: 3, gap: "mt-[2px]", lines: ["출발지/도착지와 경로가 모두 설정되지 않았", "으면 버튼 disabled,", "모두 설정되었다면 버튼 abled 상태로 변경", "및 클릭시 #3-9 화면으로 이동"] },
      { h: "#3-5", gap: "mt-[38px]" },
      { n: 1, gap: "mt-[3px]", lines: ["경로 그리기, 출발지 설정, 도착지 설정 클릭", "시 각각 #3-6, #3-7, #3-8처럼 노출"] },
      { n: 2, lines: ["버튼 클릭시 #3-4 화면처럼 노출"] },
    ],
  },
  {
    name: "Slide 16:9 - 5",
    no: "#3",
    title: "경로 방 추가 화면 (출발지 설정)",
    row: "pl-[23px] gap-[21px]",
    drop: "mt-[3px]",
    screens: [
      { cap: "#3-6-1", shift: "pl-[3px]", view: <RouteScreen fab="start" toast={START_TOAST} label="출발 지점 선택" /> },
      { cap: "#3-6-2", shift: "pl-[3px]", view: <RouteScreen fab="start" toast={START_TOAST} start label="출발 지점 선택" active /> },
    ],
    marks: PAIR_MARKS,
    nums: PAIR_NUMS,
    notes: [
      { h: "#3-6-1" },
      { n: 1, lines: ["버튼 클릭시 #3-5 화면으로 이동"] },
      { n: 2, gap: "mt-px", lines: ["마커가 선택되지 않은 경우 버튼 disabled"] },
      { h: "#3-6-2", gap: "mt-10" },
      { n: 1, lines: ["지도 화면에서 확대/축소, 이동 가능,", "지도 내에서 터치하는 순간 마커로 출발 지", "점을 선택함", "(똑같은 위치를 한번 더 터치하면 마커가 해", "제되고 #3-6-1 상태로 돌아감, 다른 위치를", "터치하면 기존에 선택되어있던 마커는 없어", "지고 새로운 곳이 출발 지점으로 선택됨)"] },
      { n: 2, gap: "mt-[3px]", lines: ["버튼 클릭시 출발 지점을 상태로 저장 후", "#3-5 화면으로 이동"] },
    ],
  },
  {
    name: "Slide 16:9 - 10",
    no: "#3",
    title: "경로 방 추가 화면 (도착지 설정)",
    row: "pl-[21px] gap-[21px]",
    drop: "mt-[5px]",
    screens: [
      { cap: "#3-7-1", shift: "pl-[5px]", view: <RouteScreen fab="end" toast={END_TOAST} start label="도착 지점 선택" /> },
      { cap: "#3-7-2", shift: "pl-[5px]", view: <RouteScreen fab="end" toast={END_TOAST} start end label="도착 지점 선택" active /> },
    ],
    marks: PAIR_MARKS,
    nums: PAIR_NUMS,
    notes: [
      { h: "#3-7-1" },
      { n: 1, lines: ["버튼 클릭시 #3-5 화면으로 이동"] },
      { n: 2, gap: "mt-px", lines: ["마커가 선택되지 않은 경우 버튼 disabled"] },
      { h: "#3-7-2", gap: "mt-10" },
      { n: 1, lines: ["지도 화면에서 확대/축소, 이동 가능,", "지도 내에서 터치하는 순간 마커로 도착 지", "점을 선택함", "(똑같은 위치를 한번 더 터치하면 마커가 해", "제되고 #3-7-1 상태로 돌아감, 다른 위치를", "터치하면 기존에 선택되어있던 마커는 없어", "지고 새로운 곳이 도착 지점으로 선택됨)"] },
      { n: 2, gap: "mt-[3px]", lines: ["버튼 클릭시 도착 지점을 상태로 저장 후", "#3-5 화면으로 이동"] },
    ],
  },
  {
    name: "Slide 16:9 - 12",
    no: "#3",
    title: "경로 방 추가 화면 (경로 그리기)",
    row: "pl-[27px] gap-5",
    screens: [
      { cap: "#3-8-1", view: <RouteScreen fab="draw" toast={DRAW_TOAST} start end label={DONE} /> },
      { cap: "#3-8-2", view: <RouteScreen fab="draw" toast={DRAW_TOAST} start end route="M262 450L281 463" label={DONE} active /> },
    ],
    marks: PAIR_MARKS,
    nums: PAIR_NUMS,
    notes: [
      { h: "#3-8-1" },
      { n: 1, lines: ["버튼 클릭시 #3-5 화면으로 이동"] },
      { n: 2, gap: "mt-px", lines: ["경로가 그려지지 않은 경우 버튼 disabled"] },
      { h: "#3-8-2", gap: "mt-10" },
      { n: 1, lines: ["지도 화면에서 확대/축소, 이동 가능,", "지도 내에서 터치하는 순간 직선 형태로 경", "로를 그리기 시작함"], bold: ["(지우개 기능은 FE에서 논의 후 추후 추가", "필요)"] },
      { n: 2, gap: "mt-[53px]", lines: ["버튼 클릭시 경로를 배열 상태로 저장 후", "#3-5 화면으로 이동"] },
    ],
  },
  {
    name: "Slide 16:9 - 14",
    no: "#3",
    title: "경로 방 추가 화면 (경로 그리기 - 참고용)",
    row: "pl-[25px] gap-5",
    screens: [
      { cap: "#3-8-3", shift: "pl-[2px]", view: <RouteScreen fab="draw" toast={DRAW_TOAST} start end route="M262 450L283 465L255 495" label={DONE} active /> },
      { cap: "#3-8-4", shift: "pl-[2px]", view: <RouteScreen fab="draw" toast={DRAW_TOAST} start end route="M262 450L283 465L258 495L121 499" label={DONE} active /> },
      { cap: "#3-8-5", shift: "pl-[6px]", view: <RouteScreen fab="draw" toast={DRAW_TOAST} start end route="M262 450L283 465L258 495L125 499V606" label={DONE} active /> },
    ],
    marks: [],
    nums: [],
    notes: [{ h: "#3-8-3,4,5" }, { gap: "mt-2", lines: ["차례로 한번씩 화면을 클릭했을 때 경로 직", "선으로 그려지는 과정"] }],
  },
  {
    name: "Slide 16:9 - 13",
    no: "#3",
    title: "경로 방 추가 화면",
    row: "pl-[22px] gap-5",
    drop: "mt-[7px]",
    screens: [
      { cap: "#3-9", shift: "pl-1", view: <FormScreen places done /> },
      { cap: "#3-10", view: <FormScreen places second /> },
    ],
    marks: [
      "left-[16px] top-[56px] w-[162px] h-[330px]",
      "left-[48px] top-[151px] w-[116px] h-[22px]",
      "left-[25px] top-[353px] w-[142px] h-[30px]",
      "left-[224px] top-[142px] w-[82px] h-[21px]",
      "left-[311px] top-[142px] w-[29px] h-[21px]",
      "left-[193px] top-[353px] w-[145px] h-[30px]",
    ],
    nums: [
      [1, "left-[3px] top-[245px]"],
      [2, "left-[37px] top-[152px]"],
      [3, "left-[158px] top-[357px]"],
      [1, "left-[215px] top-[133px]"],
      [2, "left-[331px] top-[141px]"],
      [3, "left-[326px] top-[357px]"],
    ],
    notes: [
      { h: "#3-9" },
      { n: 1, gap: "mt-[3px]", indent: true, lines: ["제목 input 창이 채워졌으면서", "생성된 모든 사용자의 출발/도착지, 경로가 설", "정된 경우에 대한 화면 (버튼 활성화O)"] },
      { n: 2, gap: "mt-px", lines: ["버튼 클릭시 #3-10 화면처럼 노출"] },
      { n: 3, gap: "mt-[10px]", lines: ["버튼 클릭시 사용자 제거"] },
      { n: 4, gap: "mt-[9px]", lines: ["버튼 클릭시 #4-1 손녀 기준 화면으로 이동"] },
      { h: "#3-10", gap: "mt-[26px]" },
      { n: 1, indent: true, lines: ["버튼 클릭시 사용자 2에 대한 출발지/도착지,", "경로 설정 (#3-4 화면으로 이동)"] },
      { n: 2, lines: ["버튼 클릭시 #3-9 화면처럼 노출"] },
      { n: 3, gap: "mt-[6px]", lines: ["생성된 모든 사용자에 대한 출발/도착지, 경로", "가 설정되지 않았기 때문에 버튼 disabled"] },
    ],
  },
  null,
  {
    name: "Slide 16:9 - 6",
    no: "#4",
    title: "손녀 기준 화면",
    row: "pl-[24px] gap-[29px]",
    screens: [
      { cap: "#4-1", shift: "pl-[2px]", view: <GuideScreen /> },
      { cap: "#4-2", view: <GuideScreen menu /> },
    ],
    marks: [
      "left-[22px] top-[56px] w-[32px] h-[26px]",
      "left-[149px] top-[56px] w-[33px] h-[26px]",
      "left-[34px] top-[126px] w-[116px] h-[169px]",
      "left-[129px] top-[318px] w-[50px] h-[66px]",
      "left-[277px] top-[74px] w-[75px] h-[120px]",
    ],
    nums: [
      [1, "left-[5px] top-[61px]"],
      [2, "left-[172px] top-[58px]"],
      [4, "left-[134px] top-[278px]"],
      [3, "left-[163px] top-[368px]"],
      [1, "left-[348px] top-[86px]"],
    ],
    notes: [
      { h: "#4-1" },
      { n: 1, gap: "mt-[2px]", indent: true, lines: ["클릭시 #2 메인 화면으로 이동"] },
      { n: 2, gap: "mt-3", lines: ["버튼 클릭시 #4-2 화면처럼 노출"] },
      { n: 3, gap: "mt-[7px]", lines: ["에서 현재 방의 모든 사용자 노출", "(사용자 순서대로 색상은 정해진 것으로", "사용)"] },
      { n: 4, gap: "mt-[2px]", lines: ["에서 사용자별 현재 위치 (색상O)와", "경로 (투명도 50)와 도착 위치 (검은색 마커)", "표시"] },
      { h: "#4-2", gap: "mt-[18px]" },
      { n: 1, gap: "mt-[3px]", indent: true, lines: ["현재 선택된 항목은 폰트 색상을 gray400으", "로 두고, 사용자1 보기 클릭시 #4-3 화면처럼", "노출"] },
    ],
  },
  {
    name: "Slide 16:9 - 7",
    no: "#4",
    title: "손녀 기준 화면",
    row: "pl-[26px] gap-[29px]",
    drop: "mt-[7px]",
    screens: [
      { cap: "#4-3", view: <GuideScreen single /> },
      { cap: "#4-4", view: <GuideScreen single menu loose /> },
    ],
    marks: [
      "left-[149px] top-[56px] w-[33px] h-[26px]",
      "left-[38px] top-[259px] w-[39px] h-[115px]",
      "left-[136px] top-[366px] w-[49px] h-[18px]",
      "left-[278px] top-[74px] w-[74px] h-[120px]",
    ],
    nums: [
      [2, "left-[172px] top-[58px]"],
      [1, "left-[62px] top-[261px]"],
      [3, "left-[170px] top-[368px]"],
      [1, "left-[347px] top-[86px]"],
    ],
    notes: [
      { h: "#4-3" },
      { n: 1, gap: "mt-[2px]", indent: true, lines: ["현재 선택된 사용자에 대한 경로만 표시"] },
      { n: 2, gap: "mt-3", lines: ["버튼 클릭시 #4-4 화면처럼 노출"] },
      { n: 3, gap: "mt-[7px]", lines: ["에서 현재 선택된사용자 노출"] },
      { h: "#4-4", gap: "mt-[34px]" },
      { n: 1, gap: "mt-[3px]", indent: true, lines: ["현재 선택된 항목은 폰트 색상을 gray400으", "로 두고, 모두 보기 클릭시 #4-1 화면처럼 노", "출"] },
    ],
  },
];

function NoteRow({ note }: { note: Note }) {
  const gap = note.gap ?? "";
  if (note.h) return <h3 className={`text-[9px] leading-3 font-bold text-black ${gap}`}>{note.h}</h3>;
  const leading = note.tight ? "leading-[9px]" : "leading-[25px]";
  return (
    <div className={`flex items-start gap-[3px] ${gap}`}>
      {note.n && (
        <span className={`flex shrink-0 items-center ${note.tight ? "h-[10px]" : "h-[25px]"}`}>
          <Dot n={note.n} />
        </span>
      )}
      <p className={`text-[7px] whitespace-nowrap text-[#222] ${leading} ${note.indent ? "pl-[3px]" : ""}`}>
        {note.lines?.map((l) => (
          <span key={l} className="block">
            {l}
          </span>
        ))}
        {note.bold?.map((l) => (
          <b key={l} className="block font-bold text-black">
            {l}
          </b>
        ))}
      </p>
    </div>
  );
}

function Slide({ s }: { s: SlideData }) {
  return (
    <section>
      <h1 className="mb-[10px] pl-px text-[22px] leading-[28px] text-[#808080]">{s.name}</h1>
      <article className="relative flex aspect-video bg-white">
        <div className="min-w-0 flex-1">
          <h2 className="flex pt-[14px] pl-4 text-[12px] leading-4 font-bold text-black">
            <span className="w-10">{s.no}</span>
            {s.title}
          </h2>
          <div className={`mt-[11px] flex ${s.row}`}>
            {s.screens.map((p) => (
              <figure key={p.cap} className="w-[149px] shrink-0">
                <figcaption className={`text-[9px] leading-3 font-semibold text-black ${p.shift ?? ""}`}>{p.cap}</figcaption>
                <div className={s.drop ?? "mt-1"}>{p.view}</div>
              </figure>
            ))}
            {s.extra}
          </div>
        </div>
        <aside className={`shrink-0 border-l border-[#999] pt-7 pl-[9px] ${s.aside ?? "w-[165px]"}`}>
          {s.notes.map((n, i) => (
            <NoteRow key={i} note={n} />
          ))}
        </aside>
        {s.marks.map((m) => (
          <Mark key={m} at={m} />
        ))}
        {s.nums.map(([n, at]) => (
          <Num key={at} n={n} at={at} />
        ))}
      </article>
    </section>
  );
}

export default function App() {
  return (
    <main className="grid min-h-screen grid-cols-2 content-start gap-x-[15px] gap-y-[52px] bg-[#1e1e1e] pt-[13px] pr-5 pb-6 pl-[31px] font-['Inter','Noto_Sans_CJK_KR',sans-serif]">
      {SLIDES.map((s, i) => (s ? <Slide key={s.name} s={s} /> : <div key={i} />))}
    </main>
  );
}
